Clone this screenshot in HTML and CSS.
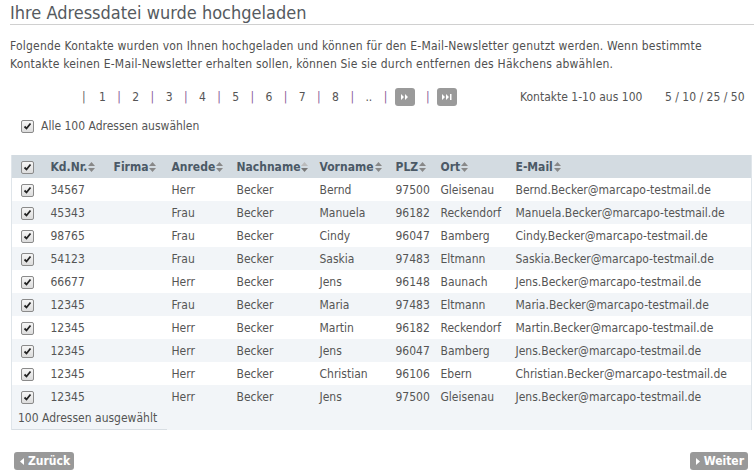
FILE: index.html
```html
<!DOCTYPE html>
<html>

<head>
    <meta charset="UTF-8">
    <title>Adressdatei hochgeladen</title>
    <link rel="stylesheet" href="styles.css">
</head>

<body>
    <div class="page">
        <h1 class="title">Ihre Adressdatei wurde hochgeladen</h1>
        <p class="intro">Folgende Kontakte wurden von Ihnen hochgeladen und können für den E-Mail-Newsletter genutzt werden. Wenn bestimmte Kontakte keinen E-Mail-Newsletter erhalten sollen, können Sie sie durch entfernen des Häkchens abwählen.</p>

        <div class="pager">
            <div class="pages">
                <span class="sep first">|</span><span>1</span>
                <span class="sep">|</span><span>2</span>
                <span class="sep">|</span><span>3</span>
                <span class="sep">|</span><span>4</span>
                <span class="sep">|</span><span>5</span>
                <span class="sep">|</span><span>6</span>
                <span class="sep">|</span><span>7</span>
                <span class="sep">|</span><span>8</span>
                <span class="sep">|</span><span>..</span>
                <span class="sep">|</span>
                <span class="pbtn"><svg width="10" height="8" viewBox="0 0 10 8"><path d="M1 1 L4 4 L1 7 Z M5 1 L8 4 L5 7 Z" fill="#fff"/></svg></span>
                <span class="sep">|</span>
                <span class="pbtn"><svg width="12" height="8" viewBox="0 0 12 8"><path d="M1 1 L4 4 L1 7 Z M5 1 L8 4 L5 7 Z" fill="#fff"/><rect x="9" y="1" width="1.5" height="6" fill="#fff"/></svg></span>
            </div>
            <div class="count">Kontakte 1-10 aus 100</div>
            <div class="sizes">5 / 10 / 25 / 50</div>
        </div>

        <div class="select-all"><span class="cb"></span>Alle 100 Adressen auswählen</div>

        <table class="contacts">
            <thead>
                <tr>
                    <th class="c-cb"><span class="cb"></span></th>
                    <th class="c-nr">Kd.Nr.<i class="sort"></i></th>
                    <th class="c-firma">Firma<i class="sort"></i></th>
                    <th class="c-anrede">Anrede<i class="sort"></i></th>
                    <th class="c-name">Nachname<i class="sort down"></i></th>
                    <th class="c-vorname">Vorname<i class="sort"></i></th>
                    <th class="c-plz">PLZ<i class="sort"></i></th>
                    <th class="c-ort">Ort<i class="sort"></i></th>
                    <th>E-Mail<i class="sort"></i></th>
                </tr>
            </thead>
            <tbody>
                <tr><td class="c-cb"><span class="cb"></span></td><td>34567</td><td></td><td>Herr</td><td>Becker</td><td>Bernd</td><td>97500</td><td>Gleisenau</td><td>Bernd.Becker@marcapo-testmail.de</td></tr>
                <tr><td class="c-cb"><span class="cb"></span></td><td>45343</td><td></td><td>Frau</td><td>Becker</td><td>Manuela</td><td>96182</td><td>Reckendorf</td><td>Manuela.Becker@marcapo-testmail.de</td></tr>
                <tr><td class="c-cb"><span class="cb"></span></td><td>98765</td><td></td><td>Frau</td><td>Becker</td><td>Cindy</td><td>96047</td><td>Bamberg</td><td>Cindy.Becker@marcapo-testmail.de</td></tr>
                <tr><td class="c-cb"><span class="cb"></span></td><td>54123</td><td></td><td>Frau</td><td>Becker</td><td>Saskia</td><td>97483</td><td>Eltmann</td><td>Saskia.Becker@marcapo-testmail.de</td></tr>
                <tr><td class="c-cb"><span class="cb"></span></td><td>66677</td><td></td><td>Herr</td><td>Becker</td><td>Jens</td><td>96148</td><td>Baunach</td><td>Jens.Becker@marcapo-testmail.de</td></tr>
                <tr><td class="c-cb"><span class="cb"></span></td><td>12345</td><td></td><td>Frau</td><td>Becker</td><td>Maria</td><td>97483</td><td>Eltmann</td><td>Maria.Becker@marcapo-testmail.de</td></tr>
                <tr><td class="c-cb"><span class="cb"></span></td><td>12345</td><td></td><td>Herr</td><td>Becker</td><td>Martin</td><td>96182</td><td>Reckendorf</td><td>Martin.Becker@marcapo-testmail.de</td></tr>
                <tr><td class="c-cb"><span class="cb"></span></td><td>12345</td><td></td><td>Herr</td><td>Becker</td><td>Jens</td><td>96047</td><td>Bamberg</td><td>Jens.Becker@marcapo-testmail.de</td></tr>
                <tr><td class="c-cb"><span class="cb"></span></td><td>12345</td><td></td><td>Herr</td><td>Becker</td><td>Christian</td><td>96106</td><td>Ebern</td><td>Christian.Becker@marcapo-testmail.de</td></tr>
                <tr><td class="c-cb"><span class="cb"></span></td><td>12345</td><td></td><td>Herr</td><td>Becker</td><td>Jens</td><td>97500</td><td>Gleisenau</td><td>Jens.Becker@marcapo-testmail.de</td></tr>
            </tbody>
            <tfoot>
                <tr>
                    <td colspan="9"><span class="selected">100 Adressen ausgewählt</span></td>
                </tr>
            </tfoot>
        </table>

        <div class="nav">
            <span class="button"><svg width="4" height="7" viewBox="0 0 4 7"><path d="M4 0 L0 3.5 L4 7 Z" fill="#fff"/></svg>Zurück</span>
            <span class="button"><svg width="4" height="7" viewBox="0 0 4 7"><path d="M0 0 L4 3.5 L0 7 Z" fill="#fff"/></svg>Weiter</span>
        </div>
    </div>
</body>

</html>
```

FILE: styles.css
```css
body {
    margin: 0;
    font-family: 'DejaVu Sans Condensed', 'DejaVu Sans', sans-serif;
    font-size: 12px;
    color: #555;
}

.page {
    padding-left: 10px;
}

.title {
    margin: 0;
    padding-top: 2px;
    height: 22px;
    line-height: 22px;
    font-size: 18px;
    font-weight: normal;
    color: #555a60;
    border-bottom: 1px solid #d0d0d0;
}

.intro {
    margin: 12px 0 0 0;
    line-height: 18px;
    color: #505050;
    letter-spacing: 0.2px;
    padding-right: 30px;
}

/* Pagination */
.pager {
    display: flex;
    align-items: center;
    height: 20px;
    margin-top: 14px;
}

.pages {
    display: flex;
    align-items: center;
    gap: 11.4px;
    margin-left: 72px;
    width: 438px;
}

.pages .sep {
    color: #8a5a98;
}

.pages .sep.first {
    color: #666;
    margin-right: 2px;
}

.pbtn {
    display: inline-flex;
    align-items: center;
    justify-content: center;
    width: 20px;
    height: 18px;
    border-radius: 3px;
    background-color: #9a9a9a;
    margin-left: -4px;
}

.count {
    width: 145px;
}

/* Checkboxes */
.cb {
    display: inline-block;
    width: 11px;
    height: 11px;
    border: 1px solid #8a8a8a;
    border-radius: 2px;
    background-image: url("data:image/svg+xml;utf8,<svg xmlns='http://www.w3.org/2000/svg' width='11' height='11'><path d='M2.5 5.5 L4.5 7.5 L8.5 2.5' stroke='%23222' stroke-width='1.8' fill='none'/></svg>"), linear-gradient(#f6f6f6, #dcdcdc);
    vertical-align: middle;
}

.select-all {
    display: flex;
    align-items: center;
    gap: 7px;
    margin-top: 11px;
    margin-left: 11px;
    height: 16px;
}

/* Table */
.contacts {
    margin-top: 21px;
    margin-left: 1px;
    width: 741px;
    border-collapse: collapse;
    table-layout: fixed;
    border-left: 1px solid #dfe5ea;
    border-right: 1px solid #dfe5ea;
}

.contacts th,
.contacts td {
    height: 23px;
    padding: 0 0 0 6px;
    text-align: left;
    white-space: nowrap;
}

.contacts th {
    background-color: #d3dbe1;
    color: #4b5966;
    font-weight: bold;
}

.contacts tbody tr:nth-child(even) td {
    background-color: #f2f5f8;
}

.contacts .c-cb {
    width: 33px;
    padding-left: 9px;
    box-sizing: border-box;
}

.contacts .c-nr { width: 57px; }
.contacts .c-firma { width: 52px; }
.contacts .c-anrede { width: 59px; }
.contacts .c-name { width: 77px; }
.contacts .c-vorname { width: 70px; }
.contacts .c-plz { width: 39px; }
.contacts .c-ort { width: 69px; }

.sort {
    display: inline-block;
    width: 7px;
    height: 10px;
    margin-left: 1px;
    vertical-align: -1px;
    background-image: url("data:image/svg+xml;utf8,<svg xmlns='http://www.w3.org/2000/svg' width='7' height='10'><path d='M0 4 L3.5 0 L7 4 Z' fill='%23888'/><path d='M0 6 L3.5 10 L7 6 Z' fill='%23888'/></svg>");
}

.sort.down {
    background-image: url("data:image/svg+xml;utf8,<svg xmlns='http://www.w3.org/2000/svg' width='7' height='10'><path d='M0 4 L3.5 0 L7 4 Z' fill='%23bbb'/><path d='M0 6 L3.5 10 L7 6 Z' fill='%23777'/></svg>");
}

.contacts tfoot td {
    background-color: #f2f5f8;
    padding: 0;
    height: 22px;
}

.selected {
    display: block;
    width: 149px;
    height: 21px;
    line-height: 21px;
    padding-left: 6px;
    border-bottom: 1px solid #d8dee3;
    background-color: #f2f5f8;
}

/* Navigation */
.nav {
    display: flex;
    justify-content: space-between;
    margin-top: 22px;
    padding: 0 6px 0 4px;
}

.button {
    display: inline-flex;
    align-items: center;
    gap: 4px;
    height: 18px;
    padding: 0 4px 0 6px;
    border-radius: 3px;
    background-color: #999;
    color: white;
    font-weight: bold;
    font-size: 12px;
}
```
